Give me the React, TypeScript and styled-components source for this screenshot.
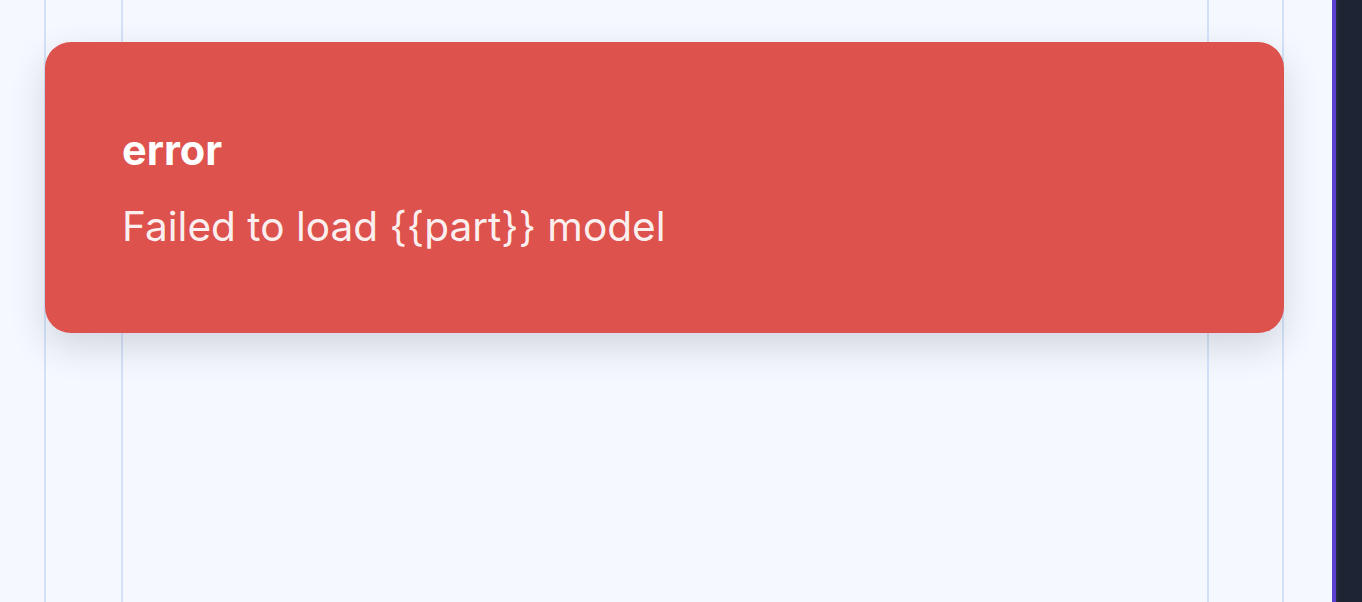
import React from "react";
import styled, { createGlobalStyle } from "styled-components";

const Global = createGlobalStyle`
  html, body { margin: 0; padding: 0; height: 100%; }
  body { background: #f5f8fe; font-family: Inter, "Noto Sans", sans-serif; overflow: hidden; }
  #root { height: 100%; }
`;

const Shell = styled.div`
  display: flex;
  height: 100vh;
  width: 100%;
`;

const Canvas = styled.main`
  flex: 1;
  display: grid;
  grid-template: 1fr / 1fr;
  background-color: #f5f8fe;
  background-image:
    linear-gradient(#d3e2f9, #d3e2f9),
    linear-gradient(#d3e2f9, #d3e2f9),
    linear-gradient(#d3e2f9, #d3e2f9),
    linear-gradient(#d3e2f9, #d3e2f9);
  background-size: 2px 100%;
  background-repeat: no-repeat;
  background-position: 44px 0, 121px 0, 1207px 0, 1282px 0;
`;

const Toast = styled.section`
  grid-area: 1 / 1;
  align-self: start;
  margin: 42px 0 0 45px;
  width: 1239px;
  height: 291px;
  box-sizing: border-box;
  padding: 85px 77px 0 77px;
  background: #dd524d;
  border-radius: 26px;
  box-shadow: 0 14px 36px rgba(30, 40, 70, 0.16);
  color: #fff;
`;

const Title = styled.h2`
  margin: 0;
  font-size: 41.5px;
  font-weight: 700;
  line-height: 46px;
`;

const Message = styled.p`
  margin: 30px 0 0;
  font-size: 40.6px;
  font-weight: 400;
  line-height: 48px;
  color: rgba(255, 255, 255, 0.92);
`;

const Accent = styled.div`
  width: 4px;
  background: #5a3fd0;
`;

const SidePanel = styled.aside`
  width: 24px;
  background: #1e2433;
  border-left: 2px solid #272d40;
`;

export default function App() {
  return (
    <>
      <Global />
      <Shell>
        <Canvas>
          <Toast role="alert">
            <Title>error</Title>
            <Message>Failed to load {"{{part}}"} model</Message>
          </Toast>
        </Canvas>
        <Accent />
        <SidePanel />
      </Shell>
    </>
  );
}
